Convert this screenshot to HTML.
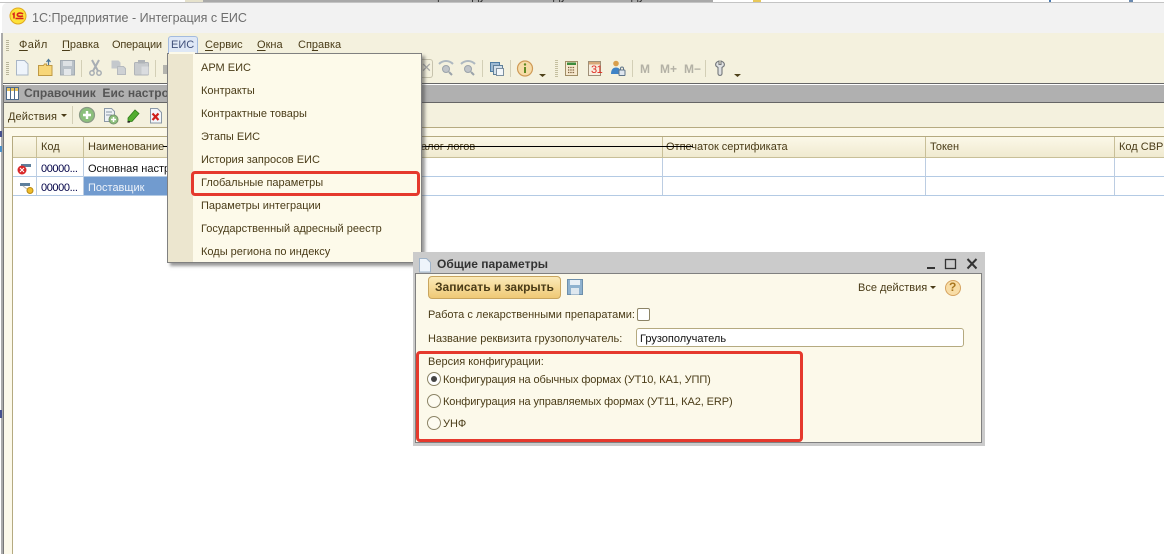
<!DOCTYPE html>
<html lang="ru"><head><meta charset="utf-8"><title>1С:Предприятие - Интеграция с ЕИС</title>
<style>
html,body{margin:0;padding:0;background:#fff}
#p{position:relative;width:1164px;height:554px;overflow:hidden;background:#fff;font:11px/20px "Liberation Sans","Noto Sans CJK SC",sans-serif;color:#4a3c18}
#p div,#p svg{position:absolute}
.t{white-space:nowrap}
.b{font-weight:bold;font-size:12px;line-height:16px}
u{text-decoration-thickness:1px;text-underline-offset:2px}
.v{width:1px;background:#d6d0b4}
.h{height:1px}
.m{left:201px;white-space:nowrap;color:#4a3c18}
</style></head><body><div id="p">
<!-- top strip behind window -->
<div style="left:185px;top:0;width:18px;height:2px;background:#e6e2cc"></div>
<div style="left:203px;top:0;width:510px;height:3px;background:#a9a9a9;overflow:hidden">
<div class="t" style="left:209px;top:-12px;font-size:12.500px;line-height:16px;color:#333">Общий модуль ЕИС: Модуль1 11 : Модуль</div></div>
<div style="left:753px;top:0;width:8px;height:2px;background:#e8c85a"></div>
<div style="left:1049px;top:0;width:2px;height:2px;background:#4a7ab0"></div>
<div style="left:1129px;top:0;width:4px;height:2px;background:#6a8ab0"></div>
<div style="left:0;top:2px;width:1164px;height:1px;background:#c4c4c4"></div>
<!-- window -->
<div style="left:2px;top:3px;width:1162px;height:30px;background:#f2f2f2;border-radius:5px 0 0 0"></div>
<svg style="left:9px;top:7px" width="18" height="18" viewBox="0 0 18 18"><circle cx="9" cy="9" r="8" fill="#fde23a" stroke="#e0a820"/><path d="M3.500 7.500l1.500-1v5M6.500 11.500h8M14 7c-1.200-1.400-5.500-1.400-5.700.8-.1 1.800 4 2 5.700 1" fill="none" stroke="#d8231c" stroke-width="1.600"/></svg>
<div class="t" style="left:32px;top:10px;color:#6e6e6e;font-size:12.500px;line-height:16px">1С:Предприятие - Интеграция с ЕИС</div>
<div style="left:1px;top:33px;width:2px;height:521px;background:#aaa"></div>
<div style="left:3px;top:33px;width:1161px;height:50px;background:#f4f1de"></div>
<!-- menu bar -->
<div style="left:6px;top:40px;width:3px;height:12px;background:repeating-linear-gradient(#b8b49a 0 1px,transparent 1px 2px)"></div>
<div class="t" style="left:19px;top:35px;letter-spacing:.4px"><u>Ф</u>айл</div>
<div class="t" style="left:62px;top:35px"><u>П</u>равка</div>
<div class="t" style="left:112px;top:35px;letter-spacing:-.2px">Операции</div>
<div style="left:168px;top:36px;width:28px;height:17px;background:#dfe8f6;border:1px solid #a3bbdf;border-bottom:0;border-radius:3px 3px 0 0"></div>
<div class="t" style="left:171px;top:35px;color:#40507a">ЕИС</div>
<div class="t" style="left:205px;top:35px"><u>С</u>ервис</div>
<div class="t" style="left:257px;top:35px"><u>О</u>кна</div>
<div class="t" style="left:298px;top:35px">Сп<u>р</u>авка</div>
<!-- toolbar -->
<div style="left:6px;top:62px;width:3px;height:14px;background:repeating-linear-gradient(#b8b49a 0 1px,transparent 1px 2px)"></div>
<svg style="left:0;top:55px" width="1164" height="28" viewBox="0 55 1164 28">
<path d="M16.500 60.500h8l3.500 3.500v11h-11.500z" fill="#eef4fb" stroke="#a9b6c6"/>
<path d="M38.500 65.500h5l1-1.500h2v1.500h5.500v10h-13.500z" fill="#f7d678" stroke="#bf9a45"/><path d="M48.500 65v-5M46.500 62l2-2.500 2 2.500" stroke="#4d7798" fill="none" stroke-width="1.200"/>
<rect x="60.500" y="60.500" width="14" height="14.500" fill="#b9c1c8" stroke="#a3abb2"/><rect x="63" y="61" width="9" height="5" fill="#dde1e4"/><rect x="64" y="69" width="7" height="6" fill="#e4e7ea"/>
<path d="M81.500 60v17M155.500 60v17M482.500 60v17M510.500 60v17M632.500 60v17M705.500 60v17" stroke="#d3cfb6"/>
<path d="M92 60l6 11M99 60l-6 11" stroke="#a8aeb4" stroke-width="2" fill="none"/><circle cx="92" cy="73" r="2.200" fill="none" stroke="#a8aeb4" stroke-width="1.500"/><circle cx="99" cy="73" r="2.200" fill="none" stroke="#a8aeb4" stroke-width="1.500"/>
<path d="M111.500 60.500h7l2 2v6h-9z" fill="#c4c8cc"/><path d="M117.500 66.500h6l2 2v6h-8z" fill="#ced1d4" stroke="#b6babe"/>
<rect x="134.500" y="62.500" width="14" height="12.500" rx="1" fill="#c8cbce" stroke="#b0b4b8"/><rect x="138" y="60" width="7" height="3.500" fill="#b0b4b8"/><rect x="141.500" y="66.500" width="7" height="8" fill="#dadcdf"/>
<path d="M163 65h6v9h-6z" fill="#b4b4ae"/>
<path d="M439 64c4-4 10-4 14 0M461 64c4-4 10-4 14 0" stroke="#aeb8c0" stroke-width="2" fill="none"/><circle cx="446" cy="69" r="3.500" fill="#c0c4c8" stroke="#9ba3aa"/><path d="M449 72l3 3" stroke="#9ba3aa" stroke-width="2"/><circle cx="468" cy="69" r="3.500" fill="#c0c4c8" stroke="#9ba3aa"/><path d="M471 72l3 3" stroke="#9ba3aa" stroke-width="2"/>
<rect x="490.500" y="62.500" width="9" height="9" fill="#9dbad3" stroke="#4f7da3"/><rect x="493.500" y="65.500" width="9" height="9" fill="#d3e0ea" stroke="#5f7f99"/><rect x="496.500" y="68.500" width="7" height="7" fill="#f2f6f9" stroke="#7c8f9f"/>
<circle cx="525" cy="68.500" r="7.500" fill="#f6dca8" stroke="#cf9a56" stroke-width="1.200"/><path d="M525 67v6" stroke="#5f8a22" stroke-width="2"/><circle cx="525" cy="64.500" r="1.200" fill="#5f8a22"/>
<path d="M539 74h7l-3.500 3zM734 74h7l-3.500 3z" fill="#4f421a"/>
<path d="M556.500 60v17" stroke="#c4bf9f" stroke-dasharray="1 1" stroke-width="3"/>
<rect x="565.500" y="61.500" width="12" height="14" fill="#f6e9cf" stroke="#a08e66"/><rect x="567" y="62.500" width="9" height="2.500" fill="#3d8c3d"/><path d="M568 67.500h7M568 70h7M568 72.500h7" stroke="#7a5a35" stroke-width="1.200" stroke-dasharray="1.300 1"/>
<rect x="588.500" y="61.500" width="12" height="14" fill="#f7efe0" stroke="#9f9078"/><rect x="589" y="62" width="11" height="2.500" fill="#d8a878"/>
<circle cx="616" cy="63.500" r="2.800" fill="#d99f4d"/><path d="M611 74c0-4.500 2-6.500 5-6.500s5 2 5 6.500z" fill="#3f83c6"/><rect x="619" y="70" width="6" height="5.500" rx=".8" fill="#dfe6ee" stroke="#5f7488"/><path d="M620.500 70v-1.500c0-2 3-2 3 0v1.500" fill="none" stroke="#5f7488"/>
<path d="M719 61c-3 1-4 3-3 5l2 1.500v6c0 2.500 4 2.500 4 0v-6l2-1.500c1-2 0-4-3-5v3.500h-2z" fill="#dfe1e2" stroke="#73777a" stroke-width="1.100"/>
</svg>
<div class="t" style="left:591px;top:62px;font-size:11px;line-height:16px;color:#e02a20;letter-spacing:-.5px">31</div>
<div style="left:421px;top:59px;width:11px;height:17px;border:1px solid #c7c3ad;border-left:0;border-radius:0 3px 3px 0"></div>
<div class="t" style="left:421px;top:60px;font-size:13px;line-height:16px;color:#a8a8a8">✕</div>
<div class="t b" style="left:640px;top:61px;color:#b3b1a5">M</div>
<div class="t b" style="left:660px;top:61px;color:#b3b1a5">M+</div>
<div class="t b" style="left:684px;top:61px;color:#b3b1a5">M−</div>
<!-- child window -->
<div style="left:3px;top:83px;width:1161px;height:1px;background:#666"></div>
<div style="left:3px;top:84px;width:1161px;height:1px;background:#fff"></div>
<div style="left:4px;top:85px;width:1160px;height:17px;background:#b0b0b0"></div>
<div style="left:3px;top:85px;width:1px;height:469px;background:#777"></div>
<div style="left:4px;top:102px;width:1160px;height:1px;background:#666"></div>
<svg style="left:6px;top:87px" width="13" height="13" viewBox="0 0 13 13"><rect x=".5" y=".5" width="12" height="12" fill="#fff" stroke="#4d6a8a"/><rect x="1" y="1" width="11" height="3" fill="#e9c35e"/><path d="M4.500 1v11M8.500 1v11" stroke="#4d6a8a"/></svg>
<div class="t b" style="left:24px;top:85px;color:#555">Справочник&nbsp; Еис настро</div>
<div style="left:4px;top:103px;width:1160px;height:24px;background:#f4f1de"></div>
<div style="left:4px;top:127px;width:1160px;height:1px;background:#b5aa80"></div>
<div style="left:4px;top:128px;width:1160px;height:8px;background:#fcf9ea"></div>
<div style="left:4px;top:136px;width:8px;height:418px;background:#fcf9ea"></div>
<div class="t" style="left:8px;top:107px;letter-spacing:.1px">Действия</div>
<svg style="left:60px;top:103px" width="110" height="24" viewBox="60 103 110 24">
<path d="M61 114h6l-3 3z" fill="#4a3c18"/>
<path d="M72.500 106v18" stroke="#d3cfb6"/>
<circle cx="87" cy="115" r="7.500" fill="#8cc07c" stroke="#8a9a86" stroke-width="1.200"/><path d="M87 111v8M83 115h8" stroke="#fff" stroke-width="2.400"/>
<path d="M104.500 108.500h7l3 3v6h-2v4h-8z" fill="#eef2f6" stroke="#8b98a6"/><path d="M106 112h6M106 115h6" stroke="#8b98a6"/><circle cx="113.500" cy="119.500" r="4.500" fill="#8cc07c" stroke="#76936c"/><path d="M113.500 117v5M111 119.500h5" stroke="#fff" stroke-width="1.500"/>
<path d="M128 118l7-8 4 3.500-7 8h-4z" fill="#52ad2f" stroke="#2f7a1b" stroke-width=".8"/><path d="M127.500 122l2.500-.2" stroke="#222" stroke-width="1.500"/>
<path d="M150.500 108.500h7l4 4v10.500h-11z" fill="#f3f6fa" stroke="#8b98a6"/><path d="M152.500 113.500l6 6.500M158.500 113.500l-6 6.500" stroke="#d0211b" stroke-width="2.200"/>
</svg>
<!-- table -->
<div style="left:12px;top:136px;width:1px;height:418px;background:#b5aa80"></div>
<div style="left:13px;top:136px;width:1151px;height:1px;background:#b5aa80"></div>
<div style="left:13px;top:137px;width:1151px;height:20px;background:linear-gradient(#fbf8e8,#f0ead0)"></div>
<div style="left:13px;top:157px;width:1151px;height:1px;background:#c8bf98"></div>
<div class="v" style="left:36px;top:137px;height:20px;background:#c8bf98"></div>
<div class="v" style="left:83px;top:137px;height:20px;background:#c8bf98"></div>
<div class="v" style="left:662px;top:137px;height:20px;background:#c8bf98"></div>
<div class="v" style="left:925px;top:137px;height:20px;background:#c8bf98"></div>
<div class="v" style="left:1114px;top:137px;height:20px;background:#c8bf98"></div>
<div class="t" style="left:41px;top:137px">Код</div>
<div class="t" style="left:88px;top:137px">Наименование</div>
<div class="t" style="left:421px;top:137px">алог логов</div>
<div class="t" style="left:666px;top:137px">Отпечаток сертификата</div>
<div class="t" style="left:930px;top:137px">Токен</div>
<div class="t" style="left:1119px;top:137px">Код СВР</div>
<div style="left:84px;top:177px;width:330px;height:18px;background:#719bcf"></div>
<div class="h" style="left:13px;top:176px;width:1151px;background:#b3cae4"></div>
<div class="h" style="left:13px;top:195px;width:1151px;background:#b3cae4"></div>
<div class="v" style="left:36px;top:158px;height:37px;background:#bccde2"></div>
<div class="v" style="left:83px;top:158px;height:37px;background:#bccde2"></div>
<div class="v" style="left:662px;top:158px;height:37px;background:#bccde2"></div>
<div class="v" style="left:925px;top:158px;height:37px;background:#bccde2"></div>
<div class="v" style="left:1114px;top:158px;height:37px;background:#bccde2"></div>
<svg style="left:15px;top:160px" width="20" height="36" viewBox="0 0 20 36"><rect x="6" y="4" width="10" height="3" fill="#5e7f9c"/><circle cx="7" cy="10" r="4.500" fill="#d9282a"/><path d="M5 8l4 4M9 8l-4 4" stroke="#fff"/><rect x="5" y="23" width="10" height="3" fill="#5e7f9c"/><path d="M8 26l4 3" stroke="#b9b9b9"/><circle cx="15" cy="30.500" r="3" fill="#f0bd2a" stroke="#b88a15"/></svg>
<div class="t" style="left:41px;top:159px;color:#000046;letter-spacing:-.4px">00000...</div>
<div class="t" style="left:41px;top:178px;color:#000046;letter-spacing:-.4px">00000...</div>
<div class="t" style="left:88px;top:159px;color:#111">Основная настройка</div>
<div class="t" style="left:88px;top:178px;color:#eef3fa">Поставщик</div>
<div style="left:163px;top:146px;width:530px;height:1px;background:#000"></div>
<div style="left:0;top:410px;width:2px;height:8px;background:#45508f"></div>
<div style="left:0;top:131px;width:2px;height:6px;background:#45508f"></div>
<div style="left:0;top:146px;width:2px;height:6px;background:#4a90c8"></div>
<!-- dropdown -->
<div style="left:167px;top:53px;width:253px;height:208px;background:#fdfaea;border:1px solid #808080;box-shadow:3px 3px 3px rgba(70,70,70,.55)"></div>
<div style="left:168px;top:54px;width:25px;height:208px;background:#ece6cf"></div>
<div style="left:169px;top:52px;width:26px;height:2px;background:#fdfaea"></div>
<div class="m" style="top:58px">АРМ ЕИС</div>
<div class="m" style="top:81px">Контракты</div>
<div class="m" style="top:104px">Контрактные товары</div>
<div class="m" style="top:127px">Этапы ЕИС</div>
<div class="m" style="top:150px">История запросов ЕИС</div>
<div class="m" style="top:173px">Глобальные параметры</div>
<div class="m" style="top:196px">Параметры интеграции</div>
<div class="m" style="top:219px">Государственный адресный реестр</div>
<div class="m" style="top:242px">Коды региона по индексу</div>
<div style="left:191px;top:171px;width:223px;height:19px;border:3px solid #e5392d;border-radius:4px"></div>
<!-- dialog -->
<div style="left:413px;top:252px;width:572px;height:194px;background:#cbcbcb"></div>
<div style="left:415px;top:273px;width:565px;height:168px;background:#fcf9ea;border:1px solid #808080"></div>
<svg style="left:418px;top:257px" width="14" height="16" viewBox="0 0 14 16"><path d="M1.500 1.500h7l4 4v9.500h-11z" fill="#eef4fb" stroke="#9fb3c8"/></svg>
<div class="t b" style="left:437px;top:256px;color:#333">Общие параметры</div>
<svg style="left:925px;top:255px" width="56" height="16" viewBox="925 255 56 16"><path d="M927 268h8" stroke="#333" stroke-width="2"/><rect x="945.500" y="259.500" width="10" height="9" fill="none" stroke="#333" stroke-width="1.300"/><path d="M967.500 259l9 9.500M976.500 259l-9 9.500" stroke="#333" stroke-width="2"/></svg>
<div class="t" style="left:428px;top:276px;width:131px;height:21px;border:1px solid #c9a55e;border-radius:4px;background:linear-gradient(#fbeab8,#efc976)"></div>
<div class="t b" style="left:435px;top:279px;color:#4a3c18">Записать и закрыть</div>
<svg style="left:567px;top:279px" width="16" height="16" viewBox="0 0 16 16"><rect x=".5" y=".5" width="15" height="15" fill="#8fb2cf" stroke="#6d8fab"/><rect x="3" y="1" width="10" height="5" fill="#e8eff5"/><rect x="4" y="9" width="8" height="6.500" fill="#dfe8ef"/></svg>
<div class="t" style="left:858px;top:278px">Все действия</div>
<svg style="left:930px;top:286px" width="7" height="4" viewBox="0 0 7 4"><path d="M0 0h6l-3 3z" fill="#4a3c18"/></svg>
<div style="left:945px;top:280px;width:14px;height:14px;border-radius:50%;background:#f8dda6;border:1px solid #d6a35f"></div>
<div class="t b" style="left:949px;top:279px;color:#a8761f">?</div>
<div class="t" style="left:428px;top:305px">Работа с лекарственными препаратами:</div>
<div style="left:637px;top:308px;width:11px;height:11px;background:#fff;border:1px solid #8c8466;border-radius:2px"></div>
<div class="t" style="left:428px;top:329px">Название реквизита грузополучатель:</div>
<div style="left:636px;top:328px;width:326px;height:17px;background:#fff;border:1px solid #b5aa80;border-radius:3px"></div>
<div class="t" style="left:640px;top:329px;color:#111">Грузополучатель</div>
<div class="t" style="left:428px;top:352px">Версия конфигурации:</div>
<div style="left:427px;top:372px;width:12px;height:12px;border:1px solid #8c8466;border-radius:50%;background:#fff"></div>
<div style="left:431px;top:376px;width:6px;height:6px;border-radius:50%;background:#444"></div>
<div style="left:427px;top:394px;width:12px;height:12px;border:1px solid #8c8466;border-radius:50%;background:#fdfbf0"></div>
<div style="left:427px;top:416px;width:12px;height:12px;border:1px solid #8c8466;border-radius:50%;background:#fdfbf0"></div>
<div class="t" style="left:443px;top:370px;letter-spacing:-.1px">Конфигурация на обычных формах (УТ10, КА1, УПП)</div>
<div class="t" style="left:443px;top:392px;letter-spacing:-.1px">Конфигурация на управляемых формах (УТ11, КА2, ERP)</div>
<div class="t" style="left:443px;top:414px">УНФ</div>
<div style="left:416px;top:351px;width:381px;height:85px;border:3px solid #e5392d;border-radius:4px"></div>
</div></body></html>
